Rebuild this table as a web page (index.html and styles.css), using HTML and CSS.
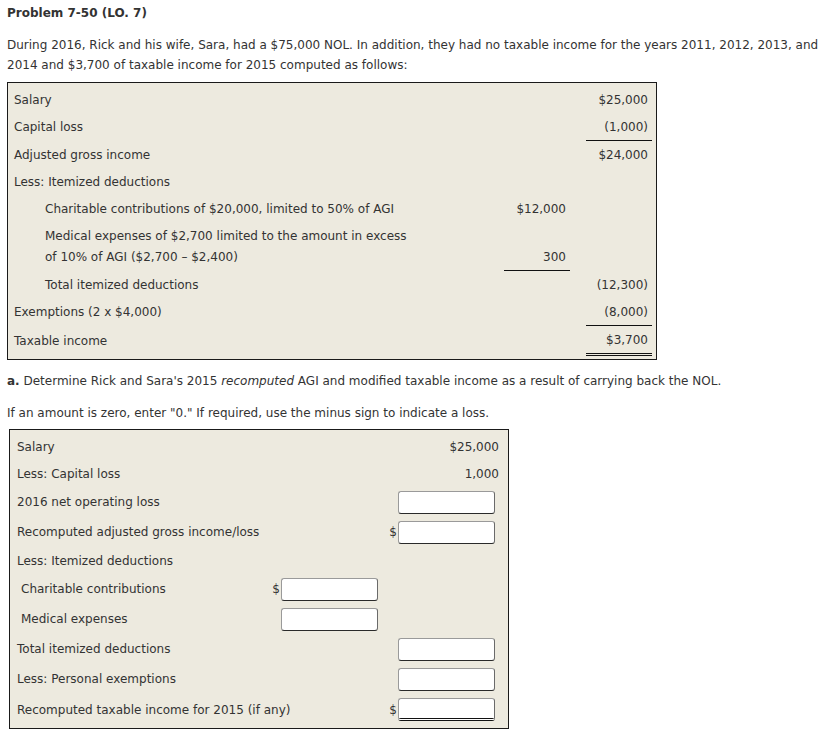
FILE: index.html
```html
<!DOCTYPE html>
<html>
<head>
<meta charset="utf-8">
<link rel="stylesheet" href="styles.css">
</head>
<body>
<div class="page">
  <div class="title">Problem 7-50 (LO. 7)</div>
  <p class="intro">During 2016, Rick and his wife, Sara, had a $75,000 NOL. In addition, they had no taxable income for the years 2011, 2012, 2013, and 2014 and $3,700 of taxable income for 2015 computed as follows:</p>

  <div class="box box1">
    <div class="row"><div class="lab">Salary</div><div class="num"></div><div class="num">$25,000</div></div>
    <div class="row"><div class="lab">Capital loss</div><div class="num"></div><div class="num ul">(1,000)</div></div>
    <div class="row"><div class="lab">Adjusted gross income</div><div class="num"></div><div class="num">$24,000</div></div>
    <div class="row"><div class="lab">Less: Itemized deductions</div><div class="num"></div><div class="num"></div></div>
    <div class="row"><div class="lab ind">Charitable contributions of $20,000, limited to 50% of AGI</div><div class="num">$12,000</div><div class="num"></div></div>
    <div class="row tall"><div class="lab ind two">Medical expenses of $2,700 limited to the amount in excess<br>of 10% of AGI ($2,700 – $2,400)</div><div class="num ul bottom">300</div><div class="num"></div></div>
    <div class="row"><div class="lab ind">Total itemized deductions</div><div class="num"></div><div class="num">(12,300)</div></div>
    <div class="row"><div class="lab">Exemptions (2 x $4,000)</div><div class="num"></div><div class="num ul">(8,000)</div></div>
    <div class="row"><div class="lab">Taxable income</div><div class="num"></div><div class="num dbl">$3,700</div></div>
  </div>

  <p class="q"><b>a.</b> Determine Rick and Sara's 2015 <i>recomputed</i> AGI and modified taxable income as a result of carrying back the NOL.</p>
  <p class="note">If an amount is zero, enter "0." If required, use the minus sign to indicate a loss.</p>

  <div class="box box2">
    <div class="row2 short"><div class="lab">Salary</div><div class="cell"></div><div class="cell"><span class="val">$25,000</span></div></div>
    <div class="row2 short"><div class="lab">Less: Capital loss</div><div class="cell"></div><div class="cell"><span class="val">1,000</span></div></div>
    <div class="row2"><div class="lab">2016 net operating loss</div><div class="cell"></div><div class="cell"><input class="inp" type="text"></div></div>
    <div class="row2"><div class="lab">Recomputed adjusted gross income/loss</div><div class="cell"></div><div class="cell"><span class="dol">$</span><input class="inp" type="text"></div></div>
    <div class="row2 short"><div class="lab">Less: Itemized deductions</div><div class="cell"></div><div class="cell"></div></div>
    <div class="row2"><div class="lab sub">Charitable contributions</div><div class="cell"><span class="dol">$</span><input class="inp" type="text"></div><div class="cell"></div></div>
    <div class="row2"><div class="lab sub">Medical expenses</div><div class="cell"><input class="inp" type="text"></div><div class="cell"></div></div>
    <div class="row2"><div class="lab">Total itemized deductions</div><div class="cell"></div><div class="cell"><input class="inp" type="text"></div></div>
    <div class="row2"><div class="lab">Less: Personal exemptions</div><div class="cell"></div><div class="cell"><input class="inp" type="text"></div></div>
    <div class="row2 last"><div class="lab">Recomputed taxable income for 2015 (if any)</div><div class="cell"></div><div class="cell"><span class="dol">$</span><input class="inp inp-dbl" type="text"></div></div>
  </div>
</div>
</body>
</html>
```

FILE: styles.css
```css
html, body {
  margin: 0;
  padding: 0;
  background: #ffffff;
}

body {
  font-family: "DejaVu Sans", Verdana, sans-serif;
  font-size: 12px;
  color: #333333;
}

.page {
  padding: 3px 7px 0 7px;
}

.title {
  font-weight: bold;
  line-height: 20px;
}

.intro {
  margin: 12px 0 0 0;
  line-height: 20px;
}

.box {
  background: #edeadf;
  border: 1px solid #1a1a1a;
}

.box1 {
  margin-top: 7px;
  width: 638px;
  padding: 3px 4px 3px 6px;
}

.row {
  display: grid;
  grid-template-columns: minmax(0, 1fr) 66px 66px;
  column-gap: 16px;
  min-height: 27px;
}

.row.tall {
  min-height: 49px;
}

.lab {
  display: flex;
  align-items: center;
  line-height: 20px;
  white-space: nowrap;
}

.lab.ind {
  padding-left: 31px;
}

.lab.two {
  line-height: 21px;
}

.num {
  display: flex;
  align-items: center;
  justify-content: flex-end;
  padding-right: 4px;
  line-height: 20px;
  min-height: 27px;
}

.num.bottom {
  align-items: flex-end;
  padding-bottom: 3px;
  min-height: 0;
}

.ul {
  border-bottom: 1px solid #111;
}

.dbl {
  min-height: 27px;
  border-bottom: 3px double #111;
}

.q {
  margin: 11px 0 0 0;
  line-height: 20px;
}

.note {
  margin: 12px 0 0 0;
  line-height: 20px;
}

.box2 {
  margin: 6px 0 0 2px;
  width: 483px;
  padding: 3px 8px 3px 7px;
}

.row2 {
  display: grid;
  grid-template-columns: minmax(0, 1fr) 115px 115px;
  column-gap: 2px;
  height: 30px;
}

.row2.short {
  height: 27px;
}

.row2.last {
  height: 31px;
}

.row2 .lab.sub {
  padding-left: 4px;
}

.cell {
  display: flex;
  align-items: center;
  justify-content: flex-end;
}

.val {
  margin-right: 1px;
  line-height: 20px;
}

.dol {
  margin-right: 1px;
}

.inp {
  box-sizing: border-box;
  width: 97px;
  height: 23px;
  margin: 0 5px 0 0;
  padding: 0 4px;
  border: 1px solid #9a9a9a;
  border-bottom-color: #2a2a2a;
  border-right-color: #6a6a6a;
  border-radius: 3px;
  background: #ffffff;
  font: inherit;
}

.inp-dbl {
  border-bottom: 3px double #111;
}
```
